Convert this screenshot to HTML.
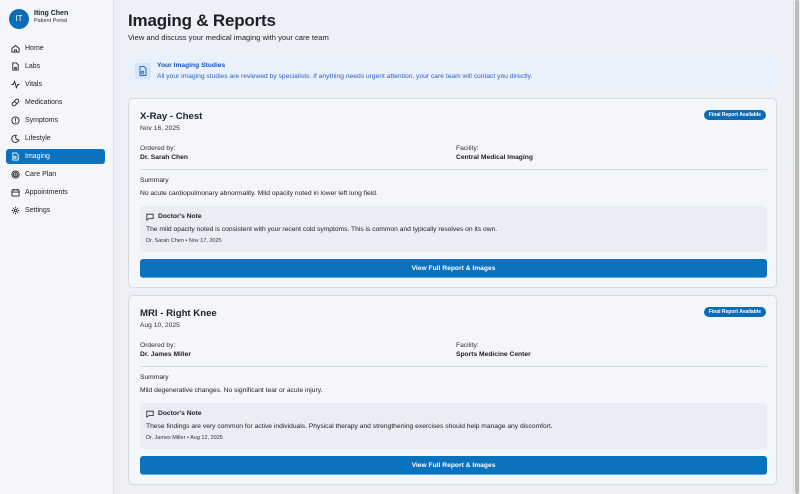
<!DOCTYPE html>
<html><head><meta charset="utf-8"><style>
*{margin:0;padding:0;box-sizing:border-box}
body{width:800px;height:494px;overflow:hidden;font-family:"Liberation Sans",sans-serif;color:#1a1f2b;background:linear-gradient(180deg,#edf0f6,#eef0f6);position:relative}
.sb{position:absolute;left:0;top:0;width:114px;height:494px;background:#f5f6fa;border-right:1px solid #dde0e7}
.av{position:absolute;left:9px;top:9px;width:20px;height:20px;border-radius:50%;background:#0b6cb5;color:#fff;font-size:8px;line-height:20px;text-align:center}
.nm{position:absolute;left:34px;top:10px;font-size:7px;font-weight:bold}
.pp{position:absolute;left:34px;top:18px;font-size:5.5px;color:#333}
.nav{position:absolute;left:6px;width:99px;height:15px;font-size:7px;line-height:15px;padding-left:19px;color:#222}
.nav svg{position:absolute;left:5px;top:3px}
.nav.on{background:#0b72bd;color:#fff;border-radius:3px}
.abs{position:absolute}
h1{position:absolute;left:128px;top:11px;font-size:17px;font-weight:bold;letter-spacing:-.2px}
.sub{position:absolute;left:128px;top:33px;font-size:7.6px;color:#222}
.info{position:absolute;left:128px;top:55px;width:649px;height:33px;background:#e8f1fc;border-radius:5px}
.info .ic{position:absolute;left:7px;top:8px;width:16px;height:16px;background:#d5e5f8;border-radius:3px}
.card{position:absolute;left:128px;width:649px;height:190px;background:#f4f6fa;border:1px solid #d6dae2;border-radius:5px}
.t{position:absolute;left:11px;top:12px;font-size:9.6px;font-weight:bold}
.d{position:absolute;left:11px;top:26px;font-size:6.7px;color:#333}
.badge{position:absolute;right:10px;top:11px;height:10px;padding:0 5px;background:#0b6cb5;color:#fff;font-size:5px;font-weight:bold;line-height:10px;border-radius:5px}
.lb{position:absolute;font-size:6.7px;color:#333}
.vb{position:absolute;font-size:6.7px;font-weight:bold;color:#222}
.hr{position:absolute;left:11px;width:627px;top:70px;border-top:1px solid #d4d9e2}
.note{position:absolute;left:11px;top:107px;width:627px;height:46px;background:#e9edf4;border-radius:4px}
.btn{position:absolute;left:11px;top:160px;width:627px;height:19px;background:#0b72bd;color:#fff;font-size:6.7px;font-weight:bold;text-align:center;line-height:19px;border-radius:3px;border-bottom:1px solid #5aa9e8}
.scroll{position:absolute;right:0;top:0;width:7px;height:494px;background:#f2f2f2;border-left:1px solid #ddd}
.scroll div{position:absolute;left:1px;top:0;width:4px;height:494px;background:#bcbcbc;border-radius:2px}
</style></head><body>
<div class="sb">
<div class="av">IT</div><div class="nm">Iting Chen</div><div class="pp">Patient Portal</div>
<div class="nav" style="top:41px"><svg width="9" height="9" viewBox="0 0 10 10" fill="none" stroke="#222" stroke-width="1"><path d="M1 5L5 1.5 9 5V9H1Z"/><path d="M4 9V6.5h2V9"/></svg>Home</div>
<div class="nav" style="top:59px"><svg width="9" height="9" viewBox="0 0 10 10" fill="none" stroke="#222" stroke-width="1"><path d="M2 1h4l2 2v6H2Z"/><path d="M3.5 6h3M3.5 7.5h3"/></svg>Labs</div>
<div class="nav" style="top:77px"><svg width="9" height="9" viewBox="0 0 10 10" fill="none" stroke="#222" stroke-width="1"><path d="M0.5 5h2l1.5-3.5 2 7 1.5-3.5h2"/></svg>Vitals</div>
<div class="nav" style="top:95px"><svg width="9" height="9" viewBox="0 0 10 10" fill="none" stroke="#222" stroke-width="1"><rect x="0.5" y="3" width="9" height="4" rx="2" transform="rotate(-45 5 5)"/><path d="M3.5 3.5l3 3"/></svg>Medications</div>
<div class="nav" style="top:113px"><svg width="9" height="9" viewBox="0 0 10 10" fill="none" stroke="#222" stroke-width="1"><circle cx="5" cy="5" r="4"/><path d="M5 2.5v3.5M5 7v.8"/></svg>Symptoms</div>
<div class="nav" style="top:131px"><svg width="9" height="9" viewBox="0 0 10 10" fill="none" stroke="#222" stroke-width="1"><path d="M6 1.5A4 4 0 1 0 8.7 6.5 3 3 0 0 1 6 1.5Z"/></svg>Lifestyle</div>
<div class="nav on" style="top:149px"><svg width="9" height="9" viewBox="0 0 10 10" fill="none" stroke="#fff" stroke-width="1"><path d="M2 1h4l2 2v6H2Z"/><circle cx="4.5" cy="6" r="1.2"/></svg>Imaging</div>
<div class="nav" style="top:167px"><svg width="9" height="9" viewBox="0 0 10 10" fill="none" stroke="#222" stroke-width="1"><circle cx="5" cy="5" r="4"/><circle cx="5" cy="5" r="2.4"/><circle cx="5" cy="5" r=".8"/></svg>Care Plan</div>
<div class="nav" style="top:185px"><svg width="9" height="9" viewBox="0 0 10 10" fill="none" stroke="#222" stroke-width="1"><rect x="1" y="2" width="8" height="7" rx="1"/><path d="M1 4.5h8M3 1v2M7 1v2"/></svg>Appointments</div>
<div class="nav" style="top:203px"><svg width="9" height="9" viewBox="0 0 10 10" fill="none" stroke="#222" stroke-width="1"><circle cx="5" cy="5" r="1.5"/><path d="M5 .8v1.5M5 7.7v1.5M.8 5h1.5M7.7 5h1.5M2 2l1 1M7 7l1 1M2 8l1-1M7 3l1-1"/></svg>Settings</div>
</div>
<h1>Imaging &amp; Reports</h1>
<div class="sub">View and discuss your medical imaging with your care team</div>
<div class="info"><div class="ic"><svg width="16" height="16" viewBox="0 0 16 16" fill="none" stroke="#2f68c8" stroke-width="1"><path d="M5 3.5h4l2 2v7H5Z"/><circle cx="7.5" cy="9.5" r="1.2"/></svg></div>
<div class="abs" style="left:29px;top:7px;font-size:6.7px;font-weight:bold;color:#1e4fbf">Your Imaging Studies</div>
<div class="abs" style="left:29px;top:18px;font-size:6.7px;color:#2f5fc0">All your imaging studies are reviewed by specialists. If anything needs urgent attention, your care team will contact you directly.</div></div>

<div class="card" style="top:98px">
<div class="t">X-Ray - Chest</div><div class="d">Nov 16, 2025</div><div class="badge">Final Report Available</div>
<div class="lb" style="left:11px;top:46px">Ordered by:</div><div class="vb" style="left:11px;top:55px">Dr. Sarah Chen</div>
<div class="lb" style="left:327px;top:46px">Facility:</div><div class="vb" style="left:327px;top:55px">Central Medical Imaging</div>
<div class="hr"></div>
<div class="lb" style="left:11px;top:78px;color:#222">Summary</div>
<div class="lb" style="left:11px;top:91px;color:#222">No acute cardiopulmonary abnormality. Mild opacity noted in lower left lung field.</div>
<div class="note"><svg class="abs" style="left:6px;top:7px" width="8" height="8" viewBox="0 0 10 10" fill="none" stroke="#222" stroke-width="1"><path d="M1 1.5h8v5.5H3.5L1 9Z"/></svg>
<div class="abs" style="left:18px;top:7px;font-size:6.7px;font-weight:bold">Doctor's Note</div>
<div class="abs" style="left:6px;top:20px;font-size:6.7px;color:#222">The mild opacity noted is consistent with your recent cold symptoms. This is common and typically resolves on its own.</div>
<div class="abs" style="left:6px;top:32px;font-size:5.5px;color:#333">Dr. Sarah Chen • Nov 17, 2025</div></div>
<div class="btn">View Full Report &amp; Images</div>
</div>

<div class="card" style="top:295px">
<div class="t">MRI - Right Knee</div><div class="d">Aug 10, 2025</div><div class="badge">Final Report Available</div>
<div class="lb" style="left:11px;top:46px">Ordered by:</div><div class="vb" style="left:11px;top:55px">Dr. James Miller</div>
<div class="lb" style="left:327px;top:46px">Facility:</div><div class="vb" style="left:327px;top:55px">Sports Medicine Center</div>
<div class="hr"></div>
<div class="lb" style="left:11px;top:78px;color:#222">Summary</div>
<div class="lb" style="left:11px;top:91px;color:#222">Mild degenerative changes. No significant tear or acute injury.</div>
<div class="note"><svg class="abs" style="left:6px;top:7px" width="8" height="8" viewBox="0 0 10 10" fill="none" stroke="#222" stroke-width="1"><path d="M1 1.5h8v5.5H3.5L1 9Z"/></svg>
<div class="abs" style="left:18px;top:7px;font-size:6.7px;font-weight:bold">Doctor's Note</div>
<div class="abs" style="left:6px;top:20px;font-size:6.7px;color:#222">These findings are very common for active individuals. Physical therapy and strengthening exercises should help manage any discomfort.</div>
<div class="abs" style="left:6px;top:32px;font-size:5.5px;color:#333">Dr. James Miller • Aug 12, 2025</div></div>
<div class="btn">View Full Report &amp; Images</div>
</div>
<div class="scroll"><div></div></div>
</body></html>
